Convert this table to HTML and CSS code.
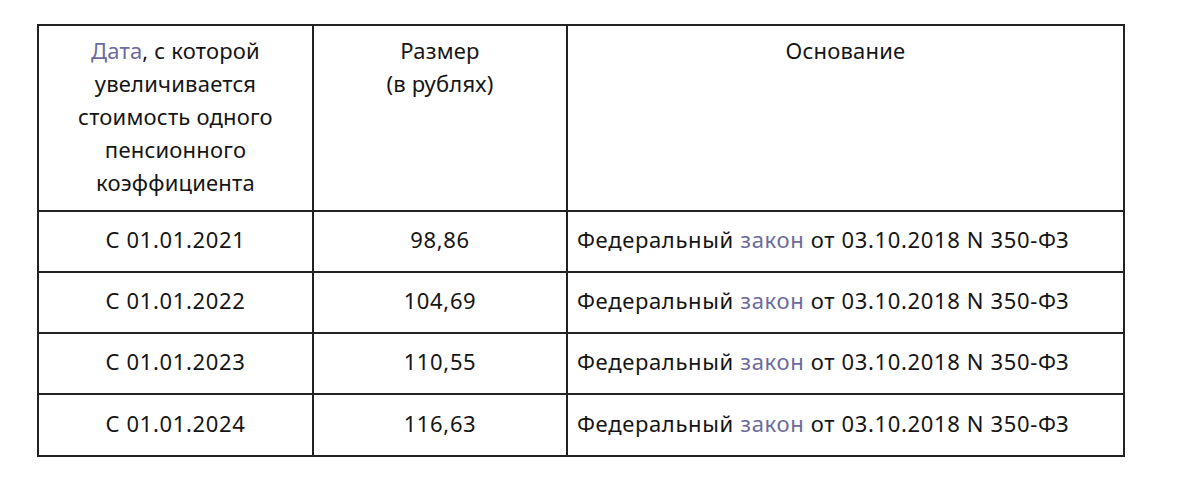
FILE: index.html
```html
<!DOCTYPE html>
<html lang="ru">
<head>
<meta charset="utf-8">
<link rel="stylesheet" href="styles.css">
</head>
<body>
<div class="page">
  <div class="grid">
    <div class="cell head">
      <div class="text"><a class="link">Дата</a>, с которой<br>увеличивается<br>стоимость одного<br>пенсионного<br>коэффициента</div>
    </div>
    <div class="cell head">
      <div class="text">Размер<br>(в рублях)</div>
    </div>
    <div class="cell head">
      <div class="text">Основание</div>
    </div>

    <div class="cell body center"><span>С 01.01.2021</span></div>
    <div class="cell body center"><span>98,86</span></div>
    <div class="cell body left"><span>Федеральный <a class="link">закон</a> от 03.10.2018 N 350-ФЗ</span></div>

    <div class="cell body center"><span>С 01.01.2022</span></div>
    <div class="cell body center"><span>104,69</span></div>
    <div class="cell body left"><span>Федеральный <a class="link">закон</a> от 03.10.2018 N 350-ФЗ</span></div>

    <div class="cell body center"><span>С 01.01.2023</span></div>
    <div class="cell body center"><span>110,55</span></div>
    <div class="cell body left"><span>Федеральный <a class="link">закон</a> от 03.10.2018 N 350-ФЗ</span></div>

    <div class="cell body center"><span>С 01.01.2024</span></div>
    <div class="cell body center"><span>116,63</span></div>
    <div class="cell body left"><span>Федеральный <a class="link">закон</a> от 03.10.2018 N 350-ФЗ</span></div>
  </div>
</div>
</body>
</html>
```

FILE: styles.css
```css
html, body {
  margin: 0;
  padding: 0;
  background: #ffffff;
}

.page {
  padding: 24px 0 0 37px;
  font-family: "Noto Sans", "Open Sans", sans-serif;
  font-size: 22px;
  letter-spacing: 0.2px;
  color: #151515;
}

.grid {
  display: grid;
  grid-template-columns: 275px 254px 557px;
  grid-template-rows: 186px 61px 61px 61px 62px;
  width: 1086px;
  border-top: 2px solid #222222;
  border-left: 2px solid #222222;
  box-sizing: content-box;
}

.cell {
  border-right: 2px solid #222222;
  border-bottom: 2px solid #222222;
  box-sizing: border-box;
}

.head {
  padding-top: 8px;
  text-align: center;
  line-height: 33px;
}

.body {
  display: flex;
  align-items: center;
  padding-bottom: 5px;
  line-height: 28px;
  letter-spacing: 0.65px;
}

.center {
  justify-content: center;
}

.left {
  justify-content: flex-start;
  padding-left: 9px;
}

.link {
  color: #6b6a9e;
  text-decoration: none;
}
```
